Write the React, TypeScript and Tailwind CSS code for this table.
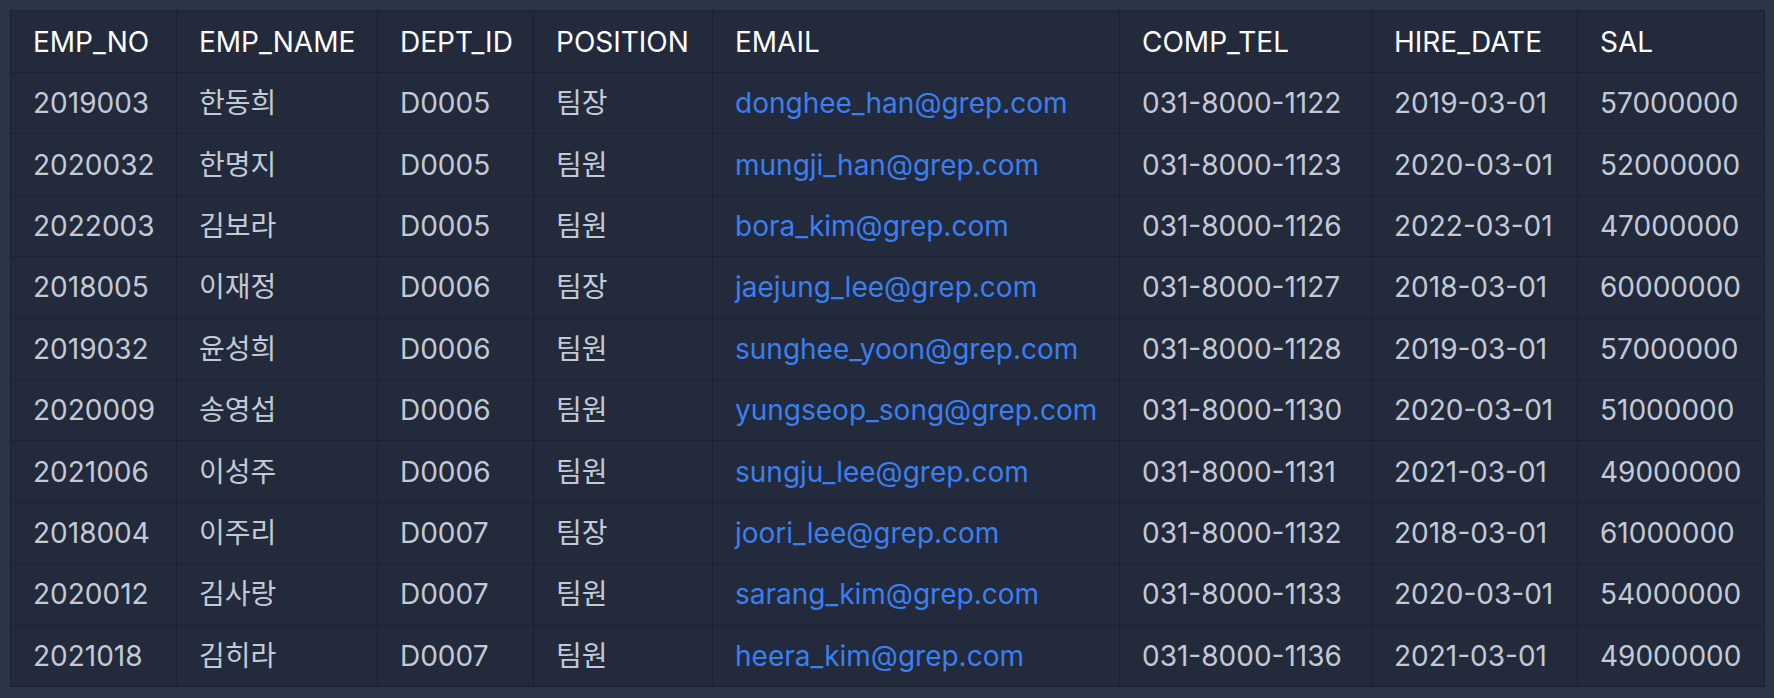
const rows = [
  ["2019003", "한동희", "D0005", "팀장", "donghee_han@grep.com", "031-8000-1122", "2019-03-01", "57000000"],
  ["2020032", "한명지", "D0005", "팀원", "mungji_han@grep.com", "031-8000-1123", "2020-03-01", "52000000"],
  ["2022003", "김보라", "D0005", "팀원", "bora_kim@grep.com", "031-8000-1126", "2022-03-01", "47000000"],
  ["2018005", "이재정", "D0006", "팀장", "jaejung_lee@grep.com", "031-8000-1127", "2018-03-01", "60000000"],
  ["2019032", "윤성희", "D0006", "팀원", "sunghee_yoon@grep.com", "031-8000-1128", "2019-03-01", "57000000"],
  ["2020009", "송영섭", "D0006", "팀원", "yungseop_song@grep.com", "031-8000-1130", "2020-03-01", "51000000"],
  ["2021006", "이성주", "D0006", "팀원", "sungju_lee@grep.com", "031-8000-1131", "2021-03-01", "49000000"],
  ["2018004", "이주리", "D0007", "팀장", "joori_lee@grep.com", "031-8000-1132", "2018-03-01", "61000000"],
  ["2020012", "김사랑", "D0007", "팀원", "sarang_kim@grep.com", "031-8000-1133", "2020-03-01", "54000000"],
  ["2021018", "김히라", "D0007", "팀원", "heera_kim@grep.com", "031-8000-1136", "2021-03-01", "49000000"],
];

const cols = [
  { name: "EMP_NO", w: "w-[166px]" },
  { name: "EMP_NAME", w: "w-[201px]" },
  { name: "DEPT_ID", w: "w-[156px]" },
  { name: "POSITION", w: "w-[179px]" },
  { name: "EMAIL", w: "w-[407px]" },
  { name: "COMP_TEL", w: "w-[252px]" },
  { name: "HIRE_DATE", w: "w-[206px]" },
  { name: "SAL", w: "w-[187px]" },
];

export default function App() {
  return (
    <div className="min-h-[698px] bg-[#2a3546] p-[10px] font-['Inter','Noto_Sans_CJK_KR',sans-serif] text-[28px]">
      <table className="table-fixed border-collapse bg-[#222a3b] w-[1754px]">
        <thead>
          <tr className="h-[62px]">
            {cols.map((c) => (
              <th
                key={c.name}
                className={`${c.w} border border-[#1a2130] px-[22px] text-left font-normal text-white`}
              >
                {c.name}
              </th>
            ))}
          </tr>
        </thead>
        <tbody>
          {rows.map((r) => (
            <tr key={r[0]} className="h-[61.4px]">
              {r.map((v, i) => (
                <td
                  key={i}
                  className={
                    "border border-[#1a2130] px-[22px] whitespace-nowrap " +
                    (i === 4 ? "text-[#3b7ff0]" : "text-[#c3cad5]")
                  }
                >
                  {v}
                </td>
              ))}
            </tr>
          ))}
        </tbody>
      </table>
    </div>
  );
}
